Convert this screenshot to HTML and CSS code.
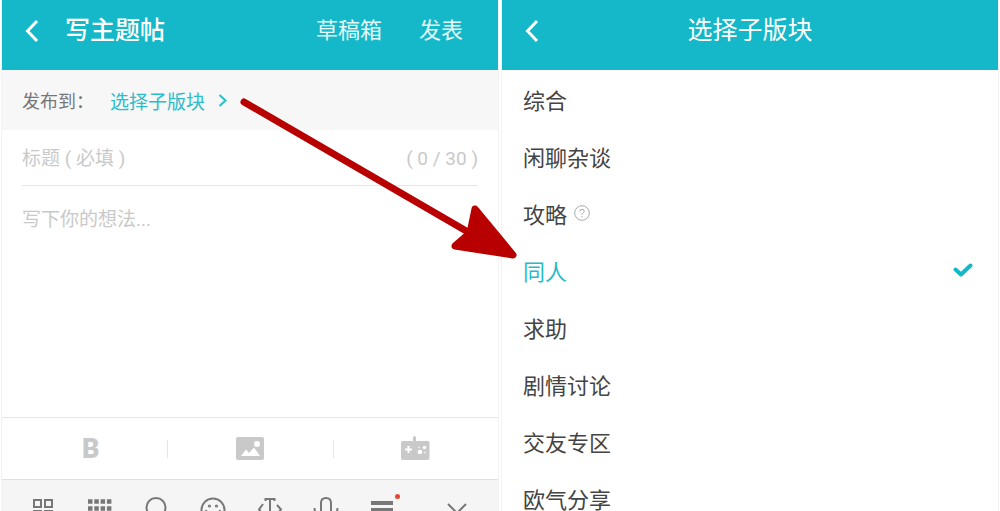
FILE: index.html
```html
<!DOCTYPE html>
<html lang="zh-CN">
<head>
    <meta charset="UTF-8">
    <meta name="viewport" content="width=device-width, initial-scale=1.0">
    <title>写主题帖</title>
    <link rel="stylesheet" href="styles.css">
</head>
<body>
    <main class="screens">
        <section class="screen editor">
            <header class="topbar">
                <button class="back" aria-label="返回">
                    <svg width="14" height="24" viewBox="0 0 14 24"><path d="M12 2 2.500 12 12 22"/></svg>
                </button>
                <h1 class="title">写主题帖</h1>
                <button class="action">草稿箱</button>
                <button class="action">发表</button>
            </header>

            <div class="publish">
                <span class="publish-label">发布到：</span>
                <a href="#boards" class="publish-link">选择子版块
                    <svg width="9" height="13" viewBox="0 0 9 13"><path d="M1.500 1 7.500 6.500 1.500 12"/></svg>
                </a>
            </div>

            <div class="subject">
                <input type="text" class="subject-input" aria-label="标题" placeholder="标题 ( 必填 )">
                <span class="counter">( 0 / 30 )</span>
            </div>
            <textarea class="content" aria-label="正文" placeholder="写下你的想法..."></textarea>

            <div class="toolbar">
                <button class="tool bold" aria-label="加粗">B</button>
                <button class="tool" aria-label="图片">
                    <svg width="28" height="23" viewBox="0 0 28 23">
                        <rect width="28" height="23" rx="2" fill="#c9c9c9"/>
                        <path d="M5 19 10 12.500 13 16 18 10.500 24 19Z" fill="#fff"/>
                        <circle cx="21" cy="7" r="3" fill="#fff"/>
                    </svg>
                </button>
                <button class="tool" aria-label="游戏">
                    <svg width="30" height="26" viewBox="0 0 30 26">
                        <path d="M13 5V1.500Q13 0 14.500 0T16 1.500V5H28Q29.500 5 29.500 7V22Q29.500 24 28 24H3Q1 24 1 22V7Q1 5 3 5Z" fill="#c9c9c9"/>
                        <path d="M8.500 10V17M5 13.500H12" stroke="#fff" stroke-width="2"/>
                        <circle cx="24.500" cy="11.500" r="1.800" fill="#fff"/>
                        <circle cx="20" cy="16" r="2.300" fill="#fff"/>
                        <circle cx="25" cy="16.500" r=".8" fill="#fff"/>
                        <circle cx="19" cy="11.500" r=".8" fill="#fff"/>
                    </svg>
                </button>
            </div>

            <div class="keyboard">
                <button class="key" aria-label="菜单">
                    <svg width="28" height="28" viewBox="0 0 28 28"><path d="M5 3H12V10H5ZM16 3H23V10H16ZM5 14H12V21H5ZM16 14H23V21H16Z"/></svg>
                </button>
                <button class="key" aria-label="键盘">
                    <svg width="28" height="28" viewBox="0 0 28 28"><path d="M3 4.500H27M3 11.500H27M3 18.500H27" stroke-width="4.500" stroke-dasharray="4.500 1.800"/></svg>
                </button>
                <button class="key" aria-label="搜索">
                    <svg width="28" height="28" viewBox="0 0 28 28"><circle cx="14" cy="10.500" r="9.500"/><path d="M21 17 26 23"/></svg>
                </button>
                <button class="key" aria-label="表情">
                    <svg width="28" height="28" viewBox="0 0 28 28"><circle cx="15" cy="13" r="11.500"/><path d="M8 13Q9 20 15 20T22 13"/><circle cx="11.500" cy="9" r=".6" class="dot"/><circle cx="18.500" cy="9" r=".6" class="dot"/></svg>
                </button>
                <button class="key" aria-label="光标">
                    <svg width="28" height="28" viewBox="0 0 28 28"><path d="M10.500 4V2H19.500V4M15 2V21M11 21H19M8 7 4 12.500 8 17M22 8 26 12.500 22 17"/></svg>
                </button>
                <button class="key" aria-label="语音">
                    <svg width="28" height="28" viewBox="0 0 28 28"><path d="M10 14V6Q10 1 15 1T20 6V14Q20 18 15 18T10 14M3.500 11Q4 22 15 22T26.500 11"/></svg>
                </button>
                <button class="key" aria-label="更多">
                    <svg width="28" height="28" viewBox="0 0 28 28"><path d="M3 6H25M3 13H25M3 20H25" stroke-width="4"/></svg>
                    <span class="badge"></span>
                </button>
                <button class="key last" aria-label="收起">
                    <svg width="28" height="28" viewBox="0 0 28 28"><path d="M5 7 14 16 23 7"/></svg>
                </button>
            </div>

            <svg class="arrow" width="280" height="166" viewBox="0 0 280 166">
                <path d="M6 5 230 135" stroke-width="7"/>
                <path d="M237 112 275 158 217 149 232 136Z" fill="#b80000" stroke-width="7"/>
            </svg>
        </section>

        <section class="screen" id="boards">
            <header class="topbar centered">
                <button class="back" aria-label="返回">
                    <svg width="14" height="24" viewBox="0 0 14 24"><path d="M12 2 2.500 12 12 22"/></svg>
                </button>
                <h2 class="title">选择子版块</h2>
            </header>
            <ul class="boards">
                <li><button class="board">综合</button></li>
                <li><button class="board">闲聊杂谈</button></li>
                <li>
                    <button class="board">攻略
                        <svg class="help" width="16" height="16" viewBox="0 0 16 16"><circle cx="8" cy="8" r="7.300"/><path d="M5.800 6.500Q5.800 4.300 8 4.300T10.200 6.300Q10.200 7.300 9 8T8 9.700M8 11V12.300"/></svg>
                    </button>
                </li>
                <li>
                    <button class="board selected">同人
                        <svg class="check" width="20" height="14" viewBox="0 0 20 14"><path d="M2.500 6.500 8 11.500 17.500 2.500"/></svg>
                    </button>
                </li>
                <li><button class="board">求助</button></li>
                <li><button class="board">剧情讨论</button></li>
                <li><button class="board">交友专区</button></li>
                <li><button class="board">欧气分享</button></li>
            </ul>
        </section>
    </main>
</body>
</html>
```
FILE: styles.css
```css
* {
    box-sizing: border-box;
}
body {
    margin: 0;
    background: #fff;
    font-family: Roboto, "Noto Sans CJK SC", sans-serif;
    color: #444;
}
button, input, textarea {
    padding: 0;
    border: none;
    background: none;
    font-family: inherit;
    color: inherit;
}
button {
    cursor: pointer;
}
svg {
    display: block;
    fill: none;
}
.screens {
    display: grid;
    grid-template-columns: 1fr 1fr;
    gap: 4px;
    height: 100vh;
    padding: 0 2px;
    overflow: hidden;
}
.screen {
    position: relative;
    display: flex;
    flex-direction: column;
    min-width: 0;
    min-height: 0;
    box-shadow: 0 0 0 1px #f3f3f3;
}

/* header */
.topbar {
    display: flex;
    align-items: center;
    flex-shrink: 0;
    height: 70px;
    padding: 0 35px 8px 23px;
    background: #14b8c8;
    color: #fff;
}
.back path {
    stroke: #fff;
    stroke-width: 3;
}
.title {
    flex: 1;
    margin: 0 0 0 26px;
    font-size: 25px;
    line-height: 36px;
    font-weight: 500;
}
.action {
    margin-left: 37px;
    font-size: 22px;
    line-height: 32px;
    color: #e4f8fa;
}
.centered {
    padding-right: 37px;
}
.centered .title {
    margin-left: 0;
    font-weight: 400;
    text-align: center;
}

/* editor */
.publish {
    display: flex;
    align-items: center;
    flex-shrink: 0;
    height: 60px;
    padding: 0 20px;
    background: #f7f7f7;
}
.publish-label {
    width: 88px;
    font-size: 18px;
    color: #777;
}
.publish-link {
    display: flex;
    align-items: center;
    gap: 13px;
    font-size: 19px;
    color: #2bbdcb;
    text-decoration: none;
}
.publish-link path {
    stroke: #2bbdcb;
    stroke-width: 2;
}
.subject {
    display: flex;
    align-items: center;
    flex-shrink: 0;
    height: 56px;
    margin: 0 20px;
    padding-top: 2px;
    border-bottom: 1px solid #e6e6e6;
}
.subject-input {
    flex: 1;
    min-width: 0;
    font-size: 19px;
}
.subject-input::placeholder, .content::placeholder {
    color: #c9c9c9;
    opacity: 1;
}
.counter {
    font-size: 19px;
    color: #c9c9c9;
}
.content {
    flex: 1;
    min-height: 0;
    margin: 20px 20px 0;
    font-size: 19px;
    line-height: 28px;
    resize: none;
}
.toolbar {
    display: grid;
    grid-template-columns: repeat(3, 1fr);
    flex-shrink: 0;
    height: 62px;
    border-top: 1px solid #e6e6e6;
}
.tool {
    position: relative;
    display: flex;
    align-items: center;
    justify-content: center;
}
.tool + .tool::before {
    content: "";
    position: absolute;
    left: 0;
    width: 1px;
    height: 18px;
    background: #e6e6e6;
}
.bold {
    padding-left: 12px;
    font-size: 27px;
    font-weight: 900;
    color: #c9c9c9;
}
.keyboard {
    display: flex;
    justify-content: space-between;
    flex-shrink: 0;
    height: 32px;
    padding: 17px 27px 0;
    border-top: 1px solid #e0e0e0;
    background: #f5f5f5;
    overflow: hidden;
}
.key {
    position: relative;
    width: 28px;
    height: 28px;
}
.key svg {
    stroke: #777;
    stroke-width: 2;
}
.last {
    margin-left: 19px;
}
.key .dot {
    fill: #777;
}
.badge {
    position: absolute;
    top: -3px;
    right: -4px;
    width: 5px;
    height: 5px;
    border-radius: 50%;
    background: #e2492f;
}

/* arrow to the board list */
.arrow {
    position: absolute;
    z-index: 1;
    top: 97px;
    left: 236px;
    stroke: #b80000;
    stroke-linecap: round;
    stroke-linejoin: round;
    pointer-events: none;
}

/* board list */
.boards {
    margin: 0;
    padding: 0;
    list-style: none;
}
.board {
    display: flex;
    align-items: center;
    width: 100%;
    height: 57px;
    padding: 0 25px 0 21px;
    font-size: 22px;
    text-align: left;
}
.selected {
    color: #1fbccb;
}
.help {
    margin-left: 7px;
    stroke: #aaa;
}
.check {
    margin-left: auto;
    stroke: #14b8c8;
    stroke-width: 4;
    stroke-linecap: round;
    stroke-linejoin: round;
}
```
